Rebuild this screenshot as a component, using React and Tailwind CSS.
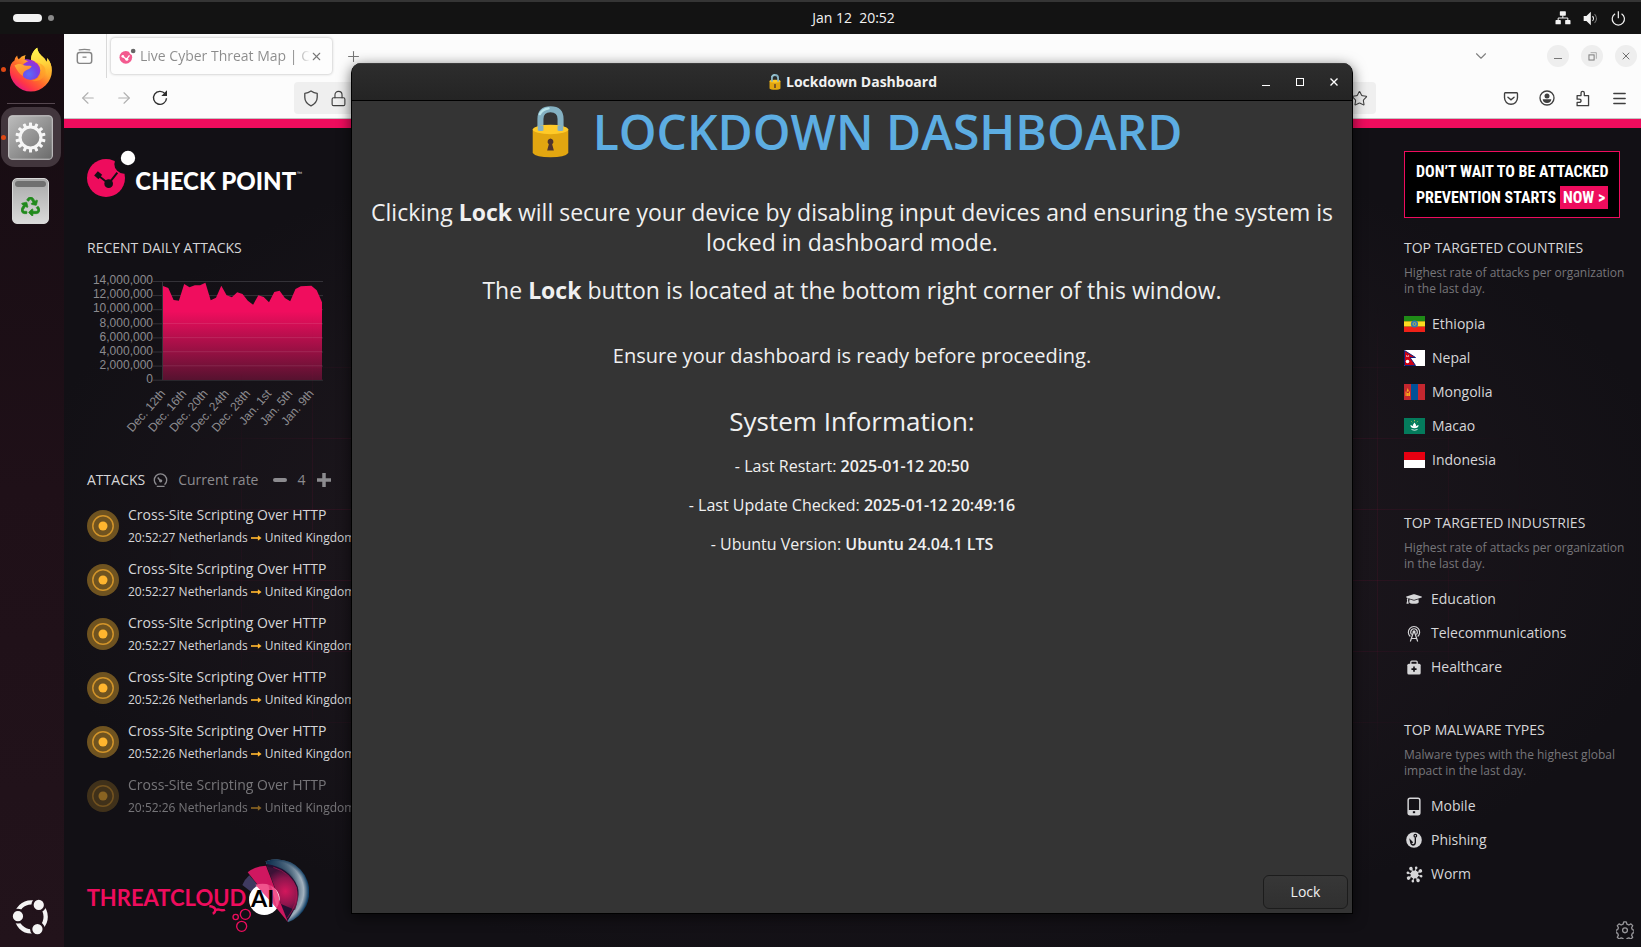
import React from "react";
import { FaRecycle, FaGraduationCap } from "react-icons/fa";
import { ArrowLeft, ArrowRight, ChevronDown, Lock, Menu, Plus, Star, X } from "lucide-react";

const PINK = "#ee0c5d";

function Art({ box, className, children, label }) {
  return (
    <svg viewBox={box} className={className} fill="none" role={label ? "img" : undefined} aria-label={label} aria-hidden={label ? undefined : true}>
      {children}
    </svg>
  );
}

/* ---------- desktop shell ---------- */

function TopBar() {
  return (
    <header className="grid h-[34px] shrink-0 grid-cols-[1fr_auto_1fr] items-center border-t-2 border-[#353535] bg-[#131313] text-white">
      <div className="flex items-center gap-[6px] pl-[13px]">
        <span className="h-2 w-[29px] rounded-full bg-[#f2f2f2]" />
        <span className="h-[6px] w-[6px] rounded-full bg-[#8a8a8a]" />
      </div>
      <time className="ml-[66px] whitespace-pre text-sm leading-5 text-[#f2f2f2]">Jan 12  20:52</time>
      <div className="flex items-center justify-end gap-3 pr-[15px]">
        <Art box="644 32 47 42" className="h-[14px] w-4" label="Wired network">
          <g fill="#f2f2f2">
            <rect x="658" y="33" width="18" height="13" rx="2" />
            <rect x="645" y="59" width="16" height="13" rx="2" />
            <rect x="674" y="59" width="16" height="13" rx="2" />
          </g>
          <path d="M667 45v8M653 60v-7h29v7" stroke="#f2f2f2" strokeWidth="3" />
        </Art>
        <Art box="730 32 47 44" className="h-[15px] w-4" label="Volume">
          <path d="M732 47h8l13-13v40l-13-13h-8z" fill="#f2f2f2" />
          <path d="M758 47q6 7 0 14" stroke="#f2f2f2" strokeWidth="3" />
          <path d="M764 41q11 13 0 26" stroke="#777" strokeWidth="3" />
        </Art>
        <Art box="814 31 44 44" className="h-[15px] w-[15px]" label="Power">
          <path d="M826 39a18 18 0 1 0 19 0M835.500 32v20" stroke="#f2f2f2" strokeWidth="3.500" />
        </Art>
      </div>
    </header>
  );
}

function FirefoxIcon() {
  return (
    <Art box="28 140 132 136" className="h-[45px] w-11" label="Firefox">
      <defs>
        <linearGradient id="fxBody" x1="140" y1="155" x2="55" y2="268" gradientUnits="userSpaceOnUse">
          <stop offset="0.05" stopColor="#fff14a" />
          <stop offset="0.35" stopColor="#ffb02e" />
          <stop offset="0.6" stopColor="#ff6a2b" />
          <stop offset="0.82" stopColor="#ff3647" />
          <stop offset="1" stopColor="#e31587" />
        </linearGradient>
        <linearGradient id="fxTail" x1="115" y1="145" x2="140" y2="240" gradientUnits="userSpaceOnUse">
          <stop offset="0" stopColor="#fff44f" />
          <stop offset="0.5" stopColor="#ffd23a" />
          <stop offset="1" stopColor="#ff8a1e" stopOpacity="0" />
        </linearGradient>
        <radialGradient id="fxGlobe" cx="88" cy="222" r="42" gradientUnits="userSpaceOnUse">
          <stop offset="0" stopColor="#5b6df8" />
          <stop offset="0.6" stopColor="#7542e5" />
          <stop offset="1" stopColor="#a62bd0" />
        </radialGradient>
        <linearGradient id="fxHead" x1="60" y1="180" x2="85" y2="235" gradientUnits="userSpaceOnUse">
          <stop offset="0" stopColor="#ffb63a" />
          <stop offset="1" stopColor="#ff7a2a" />
        </linearGradient>
      </defs>
      <path d="M44 181q2-10 8-15 1 8 5 11 7-10 21-13-5 7-2 15 8-2 18 1c0-17 7-30 19-38 1 14 10 21 20 31 3 3 6 8 7 12 3-4 3-8 3-12 9 11 14 23 14 38a63 63 0 1 1-127 0c0-13 4-24 14-30z" fill="url(#fxBody)" />
      <path d="M94 180c0-17 7-30 19-38 1 14 10 21 20 31 3 3 6 8 7 12 3-4 3-8 3-12 9 11 14 23 14 38 0 10-3 20-8 28 0-28-14-50-55-59z" fill="url(#fxTail)" />
      <circle cx="93" cy="211" r="29" fill="url(#fxGlobe)" />
      <path d="M44 196c8-6 20-7 31 0 8 1 15 0 21 2-3 8-12 9-19 14-6 4-8 9-7 16-10-5-17-16-26-32z" fill="url(#fxHead)" />
      <path d="M72 178c8-2 25-2 35 8-8-3-13-2-17 2-5-5-11-8-18-10z" fill="#9a2fd0" />
      <path d="M118 188c9 8 11 20 8 30-5 14-18 23-32 24 22 6 42-7 44-27 1-12-6-22-20-27z" fill="#ffa028" opacity=".55" />
    </Art>
  );
}

function GearTile() {
  const teeth = Array.from({ length: 14 }, (_, i) => (i * 360) / 14);
  return (
    <Art box="26 344 134 134" className="h-[45px] w-[45px]" label="Settings">
      <defs>
        <linearGradient id="tile" x1="30" y1="346" x2="150" y2="476" gradientUnits="userSpaceOnUse">
          <stop stopColor="#bcbcbc" />
          <stop offset="1" stopColor="#6d6d6d" />
        </linearGradient>
      </defs>
      <rect x="28" y="346" width="130" height="130" rx="11" fill="url(#tile)" stroke="#cfcfcf" strokeWidth="3" />
      {teeth.map((a) => (
        <rect key={a} x="88.500" y="366" width="9" height="16" rx="2" fill="#f6f6f6" transform={`rotate(${a} 93 411)`} />
      ))}
      <circle cx="93" cy="411" r="31" stroke="#f6f6f6" strokeWidth="9" />
    </Art>
  );
}

function Dock() {
  return (
    <nav aria-label="Dock" className="flex w-16 shrink-0 flex-col items-center bg-linear-to-b from-[#160c12] via-[#1f1018] to-[#22131b] pb-3 pr-[3px]">
      <button className="relative mt-[11px] flex h-[48px] w-full items-center justify-center" aria-label="Firefox">
        <span className="absolute left-[1px] h-[5px] w-[5px] rounded-full bg-[#dd4814]" />
        <FirefoxIcon />
      </button>
      <div className="mt-[10px] h-px w-12 bg-[#55474f]" />
      <button className="relative mt-[3px] flex h-[60px] w-[60px] items-center justify-center rounded-[14px] bg-[#42363d]" aria-label="Settings">
        <span className="absolute left-0 h-[5px] w-[5px] rounded-full bg-[#dd4814]" />
        <GearTile />
      </button>
      <button className="mt-[11px] flex h-[46px] w-[37px] flex-col items-center rounded-[5px] border border-[#d8d8d8] bg-linear-to-b from-[#a9a9a9] to-[#dadada] pt-[2px]" aria-label="Trash">
        <span className="h-[6px] w-[31px] rounded-sm bg-[#707070]" />
        <FaRecycle className="mt-[10px] h-[19px] w-[19px] stroke-[#218a1c] stroke-[18px] text-[#218a1c]" />
      </button>
      <button className="mt-auto" aria-label="Show Applications">
        <Art box="36 115 112 109" className="h-9 w-[37px]">
          <circle cx="94" cy="169" r="44" stroke="#f4f4f4" strokeWidth="13" />
          <g fill="#f4f4f4" stroke="#22131b" strokeWidth="7">
            <circle cx="117" cy="133" r="19" />
            <circle cx="54" cy="167" r="19" />
            <circle cx="113" cy="206" r="19" />
          </g>
        </Art>
      </button>
    </nav>
  );
}

/* ---------- browser chrome ---------- */

function WindowDot({ label, children }) {
  return (
    <button aria-label={label} className="flex h-[22px] w-[22px] items-center justify-center rounded-full bg-[#eeeeee] text-[#6f6f6f]">
      {children}
    </button>
  );
}

function TabStrip() {
  return (
    <div className="flex h-11 items-center bg-[#fcfcfc]">
      <button aria-label="Recent browsing" className="flex h-11 w-[43px] items-center justify-center border-r border-[#d9d9d9]">
        <Art box="226 144 52 50" className="-ml-[2px] h-[17px] w-[17px]">
          <path d="M236 148.500q16-2.500 32 0" stroke="#858585" strokeWidth="4" strokeLinecap="round" />
          <rect x="230" y="157" width="44" height="33" rx="7" stroke="#858585" strokeWidth="4.500" />
          <path d="M246 171h12" stroke="#858585" strokeWidth="4" />
        </Art>
      </button>
      <div className="ml-1 flex h-9 w-[221px] items-center rounded bg-[#fdfdfd] pl-2 pr-[10px] shadow-[0_0_3px_rgba(0,0,0,0.3)]">
        <Art box="356 144 50 48" className="h-4 w-[17px] shrink-0">
          <circle cx="376" cy="172" r="19" fill="#f35a8f" />
          <circle cx="398" cy="153" r="12" fill="#fdfdfd" />
          <circle cx="398" cy="153" r="7" fill="#666" />
          <path d="M368 170l10 8 9-12" stroke="#fff" strokeWidth="4" />
          <circle cx="367" cy="169" r="4" fill="#fff" />
          <circle cx="379" cy="178" r="4.500" fill="#fff" />
        </Art>
        <button className="ml-1 flex-1 whitespace-nowrap bg-linear-to-r from-[#8b8b8b] from-92% to-[#fdfdfd] bg-clip-text text-left text-sm text-transparent">
          Live Cyber Threat Map | C
        </button>
        <button aria-label="Close tab" className="shrink-0 text-[#777]">
          <X size={13} strokeWidth={2} />
        </button>
      </div>
      <button aria-label="New tab" className="ml-[13px] text-[#777]">
        <Plus size={17} strokeWidth={1.500} />
      </button>
      <button aria-label="List all tabs" className="ml-auto text-[#808080]">
        <ChevronDown size={18} strokeWidth={1.500} />
      </button>
      <div className="ml-[57px] flex gap-3 pr-1">
        <WindowDot label="Minimize"><span className="mt-1 h-px w-2 bg-[#777]" /></WindowDot>
        <WindowDot label="Restore">
          <Art box="742 153 28 28" className="h-[9px] w-[9px]">
            <path d="M750 155h18v19" stroke="#aaa" strokeWidth="3" />
            <rect x="745" y="162" width="16" height="16" stroke="#777" strokeWidth="3" />
          </Art>
        </WindowDot>
        <WindowDot label="Close"><X size={12} strokeWidth={2} /></WindowDot>
      </div>
    </div>
  );
}

function NavBar() {
  return (
    <div className="flex h-[41px] items-center border-b border-[#c3c3c3] bg-[#fcfcfc] pl-[15px] pr-[13px] text-[#3f3f3f]">
      <button aria-label="Back" className="text-[#b0b0b0]"><ArrowLeft size={18} strokeWidth={1.500} /></button>
      <button aria-label="Forward" className="ml-[18px] text-[#b0b0b0]"><ArrowRight size={18} strokeWidth={1.500} /></button>
      <button aria-label="Reload" className="ml-[19px]">
        <Art box="456 270 48 48" className="h-4 w-4">
          <path d="M495 281a19.500 19.500 0 1 0 4.500 13.500" stroke="#2f2f2f" strokeWidth="4.200" />
          <path d="M501 271v17h-17z" fill="#2f2f2f" />
        </Art>
      </button>
      <div className="ml-[126px] flex h-8 min-w-0 flex-1 items-center rounded bg-[#efefef] pl-[9px] pr-2">
        <Art box="909 268 48 52" className="h-[17px] w-4 shrink-0">
          <path d="M933 271q9 6 19 7.500v12q0 17-19 26-19-9-19-26v-12q10-1.500 19-7.500z" stroke="#4a4a4a" strokeWidth="4" strokeLinejoin="round" />
        </Art>
        <Lock className="ml-[11px] shrink-0" size={17} strokeWidth={1.600} />
        <input aria-label="Search or enter address" className="min-w-0 flex-1 bg-transparent px-2 text-sm outline-none" />
        <button aria-label="Bookmark this page"><Star size={17} strokeWidth={1.500} /></button>
      </div>
      <div className="ml-[127px] flex items-center gap-5">
        <button aria-label="Save to Pocket">
          <Art box="490 272 46 44" className="h-[15px] w-4">
            <path d="M496 277h34q2 0 2 3v12a19 19 0 0 1-38 0v-12q0-3 2-3z" stroke="#3f3f3f" strokeWidth="4" />
            <path d="M504 290l9 8 9-8" stroke="#3f3f3f" strokeWidth="4" strokeLinecap="round" />
          </Art>
        </button>
        <button aria-label="Account">
          <Art box="598 271 48 48" className="h-4 w-4">
            <circle cx="622" cy="295" r="21" stroke="#3f3f3f" strokeWidth="4" />
            <circle cx="622" cy="289" r="7.500" fill="#3f3f3f" />
            <path d="M609 299h26q-1 11-13 11t-13-11z" fill="#3f3f3f" />
          </Art>
        </button>
        <button aria-label="Extensions">
          <Art box="708 268 46 52" className="h-[17px] w-4">
            <path d="M713 285h12v-8q0-5 5-5t5 5v8h13v31h-35v-10h6q6 0 6-5t-6-5h-6z" stroke="#3f3f3f" strokeWidth="4" strokeLinejoin="round" />
          </Art>
        </button>
        <button aria-label="Open application menu"><Menu size={17} strokeWidth={2} /></button>
      </div>
    </div>
  );
}

/* ---------- threat map page: left column ---------- */

function CheckPointLogo() {
  return (
    <Art box="258 450 660 144" className="h-[48px] w-[220px]" label="Check Point">
      <circle cx="318" cy="534" r="57" fill={PINK} />
      <circle cx="372" cy="492" r="29" fill="#121015" />
      <circle cx="384" cy="474" r="21.500" fill="#fff" />
      <path d="M294 526l32 25 26-33" stroke="#121015" strokeWidth="6" />
      <rect x="286" y="517" width="17" height="17" fill="#121015" transform="rotate(40 294.500 525.500)" />
      <circle cx="326" cy="551" r="13" fill="#121015" />
      <text x="406" y="571" fill="#fff" className="font-['Lato',sans-serif] text-[72px] font-black">CHECK POINT</text>
      <text x="890" y="532" fill="#ccc" className="font-['Lato',sans-serif] text-[22px]">™</text>
    </Art>
  );
}

const SERIES = [168, 174, 210, 212, 162, 172, 166, 166, 158, 211, 203, 167, 196, 202, 187, 192, 212, 224, 196, 201, 217, 186, 182, 204, 214, 177, 169, 168, 167, 181, 217];
const Y_TICKS = ["14,000,000", "12,000,000", "10,000,000", "8,000,000", "6,000,000", "4,000,000", "2,000,000", "0"];
const X_TICKS = ["Dec. 12th", "Dec. 16th", "Dec. 20th", "Dec. 24th", "Dec. 28th", "Jan. 1st", "Jan. 5th", "Jan. 9th"];

function AttackChart() {
  const points = SERIES.map((v, i) => `${(76 + i * 5.3).toFixed(1)},${(v / 3 - 40).toFixed(1)}`).join(" ");
  return (
    <Art box="0 0 250 165" className="ml-px mt-3 h-[165px] w-[250px]" label="Recent daily attacks chart">
      <defs>
        <linearGradient id="area" x1="0" y1="12" x2="0" y2="110" gradientUnits="userSpaceOnUse">
          <stop offset="0" stopColor="#f00d5e" />
          <stop offset="0.3" stopColor="#f00d5e" />
          <stop offset="1" stopColor="#56122f" />
        </linearGradient>
      </defs>
      <g stroke="#343238">
        {Y_TICKS.map((t, i) => <path key={t} d={`M66 ${11.5 + i * 14.1}H236`} />)}
        <path d="M75.500 11V110" />
      </g>
      <polygon points={`76,110 ${points} 235,110`} fill="url(#area)" />
      <g stroke="#fff" opacity=".09">
        {Y_TICKS.slice(3, 7).map((t, i) => <path key={t} d={`M76 ${53.5 + i * 14.1}H235`} />)}
      </g>
      <g fill="#8c8b8f" className="font-['Liberation_Sans',sans-serif] text-xs">
        {Y_TICKS.map((t, i) => <text key={t} x="66" y={14 + i * 14.2} textAnchor="end">{t}</text>)}
        {X_TICKS.map((t, i) => {
          const x = 79 + i * 21.2;
          return <text key={t} x={x} y="124" textAnchor="end" transform={`rotate(-49 ${x} 124)`}>{t}</text>;
        })}
      </g>
    </Art>
  );
}

const ATTACKS = [
  { id: 1, time: "20:52:27" },
  { id: 2, time: "20:52:27" },
  { id: 3, time: "20:52:27" },
  { id: 4, time: "20:52:26" },
  { id: 5, time: "20:52:26" },
  { id: 6, time: "20:52:26", faded: true },
];

function AttackRow({ time, faded }) {
  return (
    <li className={faded ? "flex h-[54px] items-center gap-[9px] opacity-50" : "flex h-[54px] items-center gap-[9px]"}>
      <Art box="0 0 32 32" className="h-8 w-8 shrink-0">
        <circle cx="16" cy="16" r="16" fill="#6f5320" />
        <circle cx="16" cy="16" r="10.200" stroke="#d2942a" strokeWidth="1.500" />
        <circle cx="16" cy="16" r="4.500" fill="#ffb52e" />
      </Art>
      <div className="whitespace-nowrap text-[#d6d6d8]">
        <p className="h-[19px] overflow-hidden text-sm leading-[19px]">Cross-Site Scripting Over HTTP</p>
        <p className="mt-[5px] flex h-[18px] items-center overflow-hidden text-xs leading-5">
          {time} Netherlands
          <Art box="0 0 12 8" className="mx-[3px] h-2 w-[11px]">
            <path d="M0 4h9" stroke="#ffb52e" strokeWidth="1.800" />
            <path d="M7.500 1l4 3-4 3z" fill="#ffb52e" />
          </Art>
          United Kingdom
        </p>
      </div>
    </li>
  );
}

function ThreatCloudLogo() {
  return (
    <Art box="78 622 669 225" className="mt-[35px] h-[75px] w-[223px]" label="ThreatCloud AI">
      <defs>
        <radialGradient id="rim" cx="640" cy="722" r="106" gradientUnits="userSpaceOnUse">
          <stop offset="0.5" stopColor="#0b0d24" />
          <stop offset="0.72" stopColor="#6d8496" />
          <stop offset="0.86" stopColor="#a3b2bf" />
          <stop offset="1" stopColor="#0f3d63" />
        </radialGradient>
        <linearGradient id="rimFade" x1="617" y1="630" x2="700" y2="705" gradientUnits="userSpaceOnUse">
          <stop offset="0" stopColor="#062848" />
          <stop offset="1" stopColor="#062848" stopOpacity="0" />
        </linearGradient>
        <radialGradient id="core" cx="676" cy="722" r="68" gradientUnits="userSpaceOnUse">
          <stop stopColor="#d3175c" />
          <stop offset="0.6" stopColor="#8c154d" />
          <stop offset="1" stopColor="#3c1136" />
        </radialGradient>
      </defs>
      <path d="M617 632a95 95 0 0 1 67 183z" fill="url(#rim)" />
      <path d="M617 632a95 95 0 0 1 67 183z" fill="url(#rimFade)" />
      <path d="M619 640q70 10 94 68 12 40-31 104z" fill="#230f31" />
      <path d="M621 648q64 8 87 60 12 32-3 70l-42-18z" fill="url(#core)" />
      <path d="M640 650q52 15 70 62 5 48-28 90" stroke="#b11552" strokeWidth="3" opacity=".7" />
      <path d="M547 703q8-18 21-29l28 32-22 18z" fill="#3f3a60" />
      <circle cx="613" cy="747" r="46" fill="#fff" />
      <path d="M563 665q25-20 55-20l66 170z" fill="#cf1760" />
      <path d="M586 702q40-10 62 15 18 30 2 55z" fill="#f0538c" />
      <path d="M618 645l34 132q-30-50-34-132z" fill="#cf1760" opacity=".4" />
      <text x="80" y="767" fill={PINK} className="font-['Lato',sans-serif] text-[66px] font-bold">THREATCLOUD</text>
      <text x="573" y="768" fill="#000" className="font-['Lato',sans-serif] text-[70px] font-bold">AI</text>
      <g stroke={PINK} strokeWidth="4">
        <path d="M448 766q18 3 18 12-1 9-8 11M464 780q8-6 18-2 8 2 13-1" strokeWidth="7" />
        <circle cx="527" cy="799" r="8" />
        <circle cx="556" cy="791" r="15" />
        <circle cx="545" cy="827" r="15" />
      </g>
    </Art>
  );
}

function LeftColumn() {
  return (
    <section className="flex w-[288px] flex-col pl-[22px] pt-[22px]">
      <CheckPointLogo />
      <h2 className="mt-10 pl-px text-sm leading-5 text-[#d6d6d8]">RECENT DAILY ATTACKS</h2>
      <AttackChart />
      <div className="mt-[35px] flex h-5 items-center whitespace-nowrap pl-px text-sm text-[#8c8b8f]">
        <h2 className="text-[#d6d6d8]">ATTACKS</h2>
        <Art box="280 38 45 46" className="ml-2 h-[15px] w-[15px] shrink-0">
          <path d="M290 74a19 19 0 1 1 25 0" stroke="#8c8b8f" strokeWidth="4" />
          <path d="M291 79h24M302 62l-8-10" stroke="#8c8b8f" strokeWidth="4.500" />
          <circle cx="303" cy="62" r="5" fill="#8c8b8f" />
        </Art>
        <span className="ml-[10px]">Current rate</span>
        <button aria-label="Decrease rate" className="ml-[15px] flex h-4 items-center"><span className="h-1 w-[14px] rounded-sm bg-[#8c8b8f]" /></button>
        <span className="ml-[10px]">4</span>
        <button aria-label="Increase rate" className="ml-[11px]">
          <Art box="0 0 14 14" className="h-[14px] w-[14px]"><path d="M7 0v14M0 7h14" stroke="#8c8b8f" strokeWidth="3.500" /></Art>
        </button>
      </div>
      <ul className="mt-[9px] pl-px">
        {ATTACKS.map((a) => <AttackRow key={a.id} {...a} />)}
      </ul>
      <ThreatCloudLogo />
    </section>
  );
}

/* ---------- threat map page: right column ---------- */

function Flag({ children }) {
  return <Art box="0 0 21 16" className="h-4 w-[21px]">{children}</Art>;
}

const COUNTRIES = [
  ["Ethiopia", <Flag><path d="M0 0h21v5.300H0z" fill="#1f8b17" /><path d="M0 5.300h21v5.400H0z" fill="#fcdc1f" /><path d="M0 10.700h21V16H0z" fill="#ef2118" /><circle cx="10.500" cy="8" r="3.600" fill="#2f79b5" /><circle cx="10.500" cy="8" r="1.500" stroke="#a9b45c" /></Flag>],
  ["Nepal", <Flag><path d="M0 0h21v16H0z" fill="#fff" /><path d="M.5.500L11.500 7.500H6l5.500 8H.5z" fill="#ce0013" stroke="#10207c" strokeWidth="1" /><circle cx="3.500" cy="11.500" r="1.800" fill="#fff" /><path d="M2 5q1.500 2 3 0v1.500H2z" fill="#fff" /></Flag>],
  ["Mongolia", <Flag><path d="M0 0h21v16H0z" fill="#c4272f" /><path d="M7 0h7v16H7z" fill="#015197" /><path d="M1.500 7.500h1V12h-1zM5 7.500h1V12H5zM3.700 4l1.200 3-1.200 1-1-1zM2.800 9h2v3h-2z" fill="#f9a51a" /></Flag>],
  ["Macao", <Flag><path d="M0 0h21v16H0z" fill="#047b5c" /><path d="M10.500 4.500q2 2 1.200 4 1.500-1.500 3-1.300-.5 3-4.200 3t-4.200-3q1.500-.2 3 1.300-.8-2 1.200-4z" fill="#fff" /><path d="M7.500 11.500q3 1.500 6 0" stroke="#fff" strokeWidth=".8" /><path d="M10.500 2.200v1M7.500 3.500l.7.700M13.500 3.500l-.7.700" stroke="#e8d33a" strokeWidth=".9" /></Flag>],
  ["Indonesia", <Flag><path d="M0 0h21v8H0z" fill="#e70011" /><path d="M0 8h21v8H0z" fill="#fff" /></Flag>],
];

const INDUSTRIES = [
  ["Education", <FaGraduationCap className="h-4 w-4" />],
  ["Telecommunications",
    <Art box="201 374 42 50" className="h-[17px] w-[14px]">
      <g stroke="currentColor" strokeWidth="3.500">
        <path d="M211 408a17 17 0 1 1 22 0M215 402a10 10 0 1 1 14 0" />
        <path d="M220 396l-9 27M224 396l9 27M214 414h16" />
      </g>
      <circle cx="222" cy="394" r="4.500" fill="currentColor" />
    </Art>],
  ["Healthcare",
    <Art box="200 475 44 46" className="h-[15px] w-[14px]">
      <path d="M212 487v-6q0-3 3-3h14q3 0 3 3v6" stroke="currentColor" strokeWidth="4" />
      <rect x="201" y="486" width="42" height="34" rx="5" fill="currentColor" />
      <path d="M222 495v16M214 503h16" stroke="#121015" strokeWidth="5" />
    </Art>],
];

const MALWARE = [
  ["Mobile",
    <Art box="500 260 43 57" className="h-[19px] w-[14px]">
      <rect x="503.500" y="263" width="36" height="51" rx="6" stroke="currentColor" strokeWidth="4.500" />
      <path d="M504 299h36v10q0 5-5 5h-26q-5 0-5-5z" fill="currentColor" />
      <rect x="518" y="303" width="7" height="6" fill="#121015" />
    </Art>],
  ["Phishing",
    <Art box="498 366 48 48" className="h-4 w-4">
      <circle cx="522" cy="390" r="23.500" fill="currentColor" />
      <path d="M526 382v15q-1 8-7 8-6-1-7-9l-1-5 7 7" stroke="#121015" strokeWidth="4" />
      <circle cx="526" cy="377" r="4" stroke="#121015" strokeWidth="3.500" />
    </Art>],
  ["Worm",
    <Art box="496 463 52 52" className="h-[17px] w-[17px]">
      <g stroke="currentColor" strokeWidth="3">
        {[0, 45, 90, 135].map((a) => <path key={a} d="M522 468v42" transform={`rotate(${a + 14} 522 489)`} />)}
      </g>
      <circle cx="522" cy="489" r="12" fill="currentColor" />
      <g fill="currentColor">
        {[0, 45, 90, 135, 180, 225, 270, 315].map((a, i) => <circle key={a} cx="522" cy="468" r={i % 2 ? 5.5 : 4} transform={`rotate(${a + 14} 522 489)`} />)}
      </g>
    </Art>],
];

function TopList({ title, note, items, iconClass }) {
  return (
    <section>
      <h2 className="text-sm leading-5 text-[#d6d6d8]">{title}</h2>
      <p className="mt-[7px] text-xs leading-4 text-[#77767a]">{note}</p>
      <ul className="mt-[10px] text-sm text-[#d6d6d8]">
        {items.map(([name, icon]) => (
          <li key={name} className="flex h-[34px] items-center">
            <span className={iconClass}>{icon}</span>
            {name}
          </li>
        ))}
      </ul>
    </section>
  );
}

function RightColumn() {
  return (
    <aside className="flex w-[237px] shrink-0 flex-col pb-2 pt-[23px]">
      <a href="#prevention" className="mr-[21px] flex h-[67px] flex-col justify-center gap-[2px] whitespace-nowrap border border-[#ee0c5d] bg-black pl-[11px] font-['Liberation_Sans_Narrow','Roboto_Condensed','Roboto',sans-serif] text-base font-bold leading-6 text-white">
        <span>DON’T WAIT TO BE ATTACKED</span>
        <span>PREVENTION STARTS <span className="inline-block bg-[#ee0c5d] px-[3px] leading-[23px]">NOW &gt;</span></span>
      </a>
      <div className="mt-5 flex flex-col gap-9">
        <TopList title="TOP TARGETED COUNTRIES" note={<>Highest rate of attacks per organization<br />in the last day.</>} items={COUNTRIES} iconClass="w-7" />
        <TopList title="TOP TARGETED INDUSTRIES" note={<>Highest rate of attacks per organization<br />in the last day.</>} items={INDUSTRIES} iconClass="mr-[7px] flex w-5 justify-center text-[#d6d6d8]" />
        <TopList title="TOP MALWARE TYPES" note={<>Malware types with the highest global<br />impact in the last day.</>} items={MALWARE} iconClass="mr-[7px] flex w-5 justify-center text-[#d6d6d8]" />
      </div>
      <button aria-label="Map settings" className="mr-[7px] mt-auto self-end">
        <Art box="1127 635 56 56" className="h-[18px] w-[18px]">
          <path d="M1151 638h8l2 7 6 2.500 6.500-3.500 5.500 5.500-3.500 6.500 2.500 6 5 1.500v8l-5 1.500-2.500 6 3.500 6.500-5.500 5.500-6.500-3.500-6 2.500-2 5h-8l-2-5-6-2.500-6.500 3.500-5.500-5.500 3.500-6.500-2.500-6-5-1.500v-8l5-1.500 2.500-6-3.500-6.500 5.500-5.500 6.500 3.500 6-2.500z" stroke="#98979b" strokeWidth="4" strokeLinejoin="round" />
          <circle cx="1155" cy="664" r="7.500" stroke="#98979b" strokeWidth="4" />
        </Art>
      </button>
    </aside>
  );
}

function Browser() {
  return (
    <main className="flex min-w-0 flex-1 flex-col">
      <TabStrip />
      <NavBar />
      <div className="relative flex flex-1 justify-between border-t-[9px] border-[#ee0c5d] bg-[#121015] bg-[radial-gradient(ellipse_at_center,#2a1722_0%,#1a151b_45%,#121015_75%)] font-['Open_Sans','Noto_Sans',sans-serif]">
        <div className="pointer-events-none absolute inset-0 bg-[linear-gradient(to_right,rgba(238,12,93,0.12)_1px,transparent_1px),linear-gradient(to_bottom,rgba(238,12,93,0.12)_1px,transparent_1px)] bg-[length:71px_71px] bg-[position:35px_26px] [mask-image:radial-gradient(ellipse_at_center,black_40%,transparent_62%)]" />
        <LeftColumn />
        <RightColumn />
      </div>
    </main>
  );
}

/* ---------- lockdown window ---------- */

function PadlockIcon({ className }) {
  return (
    <Art box="551 140 110 155" className={className}>
      <path d="M576 215v-36q0-29 30-29t30 29v36" stroke="#84b0c1" strokeWidth="18" />
      <path d="M574 164q8-14 26-17" stroke="#b9e4ea" strokeWidth="7" strokeLinecap="round" />
      <path d="M553 210h106v70q-10 13-53 13t-53-13z" fill="#e2a610" />
      <ellipse cx="606" cy="210" rx="53" ry="14" fill="#ffca28" />
      <path d="M568 198h17v15q-8 3-17 0zM627 198h17v15q-9 3-17 0z" fill="#84b0c1" />
      <path d="M606 237a9.500 9.500 0 0 1 5 17l5 19h-20l5-19a9.500 9.500 0 0 1 5-17z" fill="#4e342e" />
    </Art>
  );
}

const SYSTEM_INFO = [
  ["Last Restart", "2025-01-12 20:50"],
  ["Last Update Checked", "2025-01-12 20:49:16"],
  ["Ubuntu Version", "Ubuntu 24.04.1 LTS"],
];

function LockdownWindow() {
  return (
    <div role="dialog" aria-labelledby="lockdown-title" className="absolute bottom-[33px] left-[351px] right-[288px] top-[63px] flex flex-col overflow-hidden rounded-t-[10px] border-x border-b border-black bg-[#343434] text-[#f0f0f0] shadow-[0_3px_14px_rgba(0,0,0,0.6)]">
      <div className="grid h-[38px] shrink-0 grid-cols-[1fr_auto_1fr] items-center border-b border-t border-b-black border-t-[#3c3c3c] bg-linear-to-b from-[#2d2d2d] to-[#242424]">
        <span />
        <div id="lockdown-title" className="flex items-center gap-[5px] pl-[2px] text-sm font-bold leading-5">
          <PadlockIcon className="h-4 w-3" />
          Lockdown Dashboard
        </div>
        <div className="flex items-center justify-end gap-[26px] pr-[14px] text-white">
          <button aria-label="Minimize" className="flex h-[10px] w-2 items-end"><span className="mb-px h-px w-2 bg-white" /></button>
          <button aria-label="Maximize" className="h-2 w-2 border border-white" />
          <button aria-label="Close">
            <Art box="0 0 8 8" className="h-2 w-2"><path d="M.5.500l7 7M7.500.500l-7 7" stroke="#fff" strokeWidth="1.400" /></Art>
          </button>
        </div>
      </div>
      <div className="flex flex-1 flex-col px-3 text-center">
        <h1 className="flex h-[62px] items-center justify-center gap-6 pl-[10px] text-5xl font-semibold text-[#5dade2]">
          <PadlockIcon className="h-[52px] w-[37px]" />
          LOCKDOWN DASHBOARD
        </h1>
        <p className="mt-[34px] text-[23px] leading-[30px]">
          Clicking <strong>Lock</strong> will secure your device by disabling input devices and ensuring the system is locked in dashboard mode.
        </p>
        <p className="mt-[18px] text-[23px] leading-[30px]">
          The <strong>Lock</strong> button is located at the bottom right corner of this window.
        </p>
        <p className="mt-[38px] text-xl leading-[26px]">Ensure your dashboard is ready before proceeding.</p>
        <h2 className="mt-[37px] text-[26px] leading-[30px]">System Information:</h2>
        <ul className="mt-5 flex flex-col gap-[19px] text-base leading-5">
          {SYSTEM_INFO.map(([label, value]) => (
            <li key={label}>- {label}: <strong className="font-semibold">{value}</strong></li>
          ))}
        </ul>
      </div>
      <button className="mb-1 mr-1 h-[34px] w-[85px] self-end rounded-md border border-[#1c1c1c] bg-linear-to-b from-[#373737] to-[#303030] text-sm">Lock</button>
    </div>
  );
}

export default function App() {
  return (
    <div className="relative flex min-h-screen flex-col bg-[#121015] font-['Open_Sans','Noto_Sans',sans-serif]">
      <TopBar />
      <div className="flex flex-1">
        <Dock />
        <Browser />
      </div>
      <LockdownWindow />
    </div>
  );
}
